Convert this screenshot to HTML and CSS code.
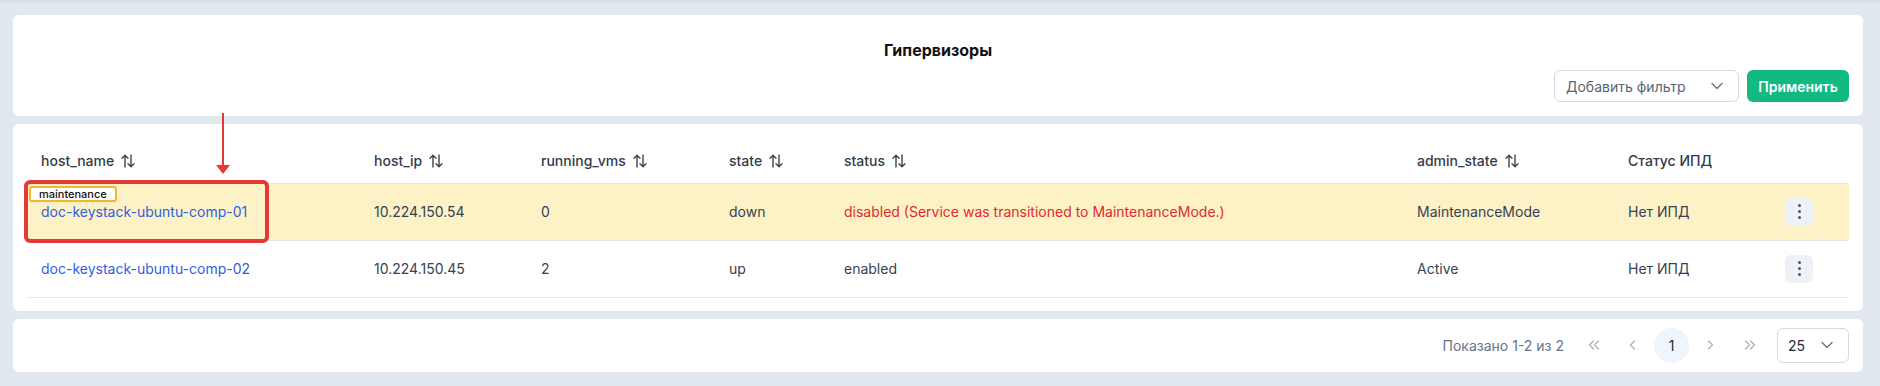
FILE: index.html
```html
<!DOCTYPE html>
<html lang="ru">
<head>
<meta charset="utf-8">
<title>Гипервизоры</title>
<link rel="stylesheet" href="styles.css">
</head>
<body>
<main class="page">
  <section class="card card-head">
    <h1 class="title">Гипервизоры</h1>
    <div class="filters">
      <div class="select filter-select">
        <span>Добавить фильтр</span>
        <svg class="chev" viewBox="0 0 12 8" width="12" height="8"><path d="M1 1.5l5 5 5-5" fill="none" stroke="currentColor" stroke-width="1.4" stroke-linecap="round" stroke-linejoin="round"/></svg>
      </div>
      <button class="btn-apply" type="button">Применить</button>
    </div>
  </section>

  <section class="card card-table">
    <table class="grid">
      <colgroup>
        <col class="c-name"><col class="c-ip"><col class="c-vms"><col class="c-state"><col class="c-status"><col class="c-admin"><col class="c-ipd"><col class="c-act">
      </colgroup>
      <thead>
        <tr>
          <th><span class="sort">host_name<svg class="sort-ic" viewBox="0 0 14 14" width="14" height="14"><path d="M4 13V1.3M1 4.3l3-3 3 3M10 1v11.7M7 9.7l3 3 3-3" fill="none" stroke="currentColor" stroke-width="1.4" stroke-linecap="round" stroke-linejoin="round"/></svg></span></th>
          <th><span class="sort">host_ip<svg class="sort-ic" viewBox="0 0 14 14" width="14" height="14"><path d="M4 13V1.3M1 4.3l3-3 3 3M10 1v11.7M7 9.7l3 3 3-3" fill="none" stroke="currentColor" stroke-width="1.4" stroke-linecap="round" stroke-linejoin="round"/></svg></span></th>
          <th><span class="sort">running_vms<svg class="sort-ic" viewBox="0 0 14 14" width="14" height="14"><path d="M4 13V1.3M1 4.3l3-3 3 3M10 1v11.7M7 9.7l3 3 3-3" fill="none" stroke="currentColor" stroke-width="1.4" stroke-linecap="round" stroke-linejoin="round"/></svg></span></th>
          <th><span class="sort">state<svg class="sort-ic" viewBox="0 0 14 14" width="14" height="14"><path d="M4 13V1.3M1 4.3l3-3 3 3M10 1v11.7M7 9.7l3 3 3-3" fill="none" stroke="currentColor" stroke-width="1.4" stroke-linecap="round" stroke-linejoin="round"/></svg></span></th>
          <th><span class="sort">status<svg class="sort-ic" viewBox="0 0 14 14" width="14" height="14"><path d="M4 13V1.3M1 4.3l3-3 3 3M10 1v11.7M7 9.7l3 3 3-3" fill="none" stroke="currentColor" stroke-width="1.4" stroke-linecap="round" stroke-linejoin="round"/></svg></span></th>
          <th><span class="sort">admin_state<svg class="sort-ic" viewBox="0 0 14 14" width="14" height="14"><path d="M4 13V1.3M1 4.3l3-3 3 3M10 1v11.7M7 9.7l3 3 3-3" fill="none" stroke="currentColor" stroke-width="1.4" stroke-linecap="round" stroke-linejoin="round"/></svg></span></th>
          <th>Статус ИПД</th>
          <th></th>
        </tr>
      </thead>
      <tbody>
        <tr class="row-warn">
          <td class="name-cell"><span class="tag">maintenance</span><a class="host-link" href="#">doc-keystack-ubuntu-comp-01</a></td>
          <td>10.224.150.54</td>
          <td>0</td>
          <td>down</td>
          <td class="status-bad">disabled (Service was transitioned to MaintenanceMode.)</td>
          <td>MaintenanceMode</td>
          <td>Нет ИПД</td>
          <td><button class="kebab" type="button"><span></span><span></span><span></span></button></td>
        </tr>
        <tr>
          <td class="name-cell"><a class="host-link" href="#">doc-keystack-ubuntu-comp-02</a></td>
          <td>10.224.150.45</td>
          <td>2</td>
          <td>up</td>
          <td>enabled</td>
          <td>Active</td>
          <td>Нет ИПД</td>
          <td><button class="kebab" type="button"><span></span><span></span><span></span></button></td>
        </tr>
      </tbody>
    </table>
    <div class="mark-box"></div>
    <svg class="mark-arrow" viewBox="0 0 14 61" width="14" height="61"><rect x="6" y="0" width="2" height="54" fill="#e53935"/><polygon points="0,52 14,52 7,61" fill="#e53935"/></svg>
  </section>

  <section class="card card-pager">
    <span class="pager-info">Показано 1-2 из 2</span>
    <div class="pager-btns">
      <span class="pbtn"><svg viewBox="0 0 12 10" width="12" height="10"><path d="M5.5 1L1.5 5l4 4M10.5 1l-4 4 4 4" fill="none" stroke="currentColor" stroke-width="1.2" stroke-linecap="round" stroke-linejoin="round"/></svg></span>
      <span class="pbtn"><svg viewBox="0 0 7 10" width="7" height="10"><path d="M5.5 1L1.5 5l4 4" fill="none" stroke="currentColor" stroke-width="1.2" stroke-linecap="round" stroke-linejoin="round"/></svg></span>
      <span class="pbtn pbtn-active">1</span>
      <span class="pbtn"><svg viewBox="0 0 7 10" width="7" height="10"><path d="M1.5 1l4 4-4 4" fill="none" stroke="currentColor" stroke-width="1.2" stroke-linecap="round" stroke-linejoin="round"/></svg></span>
      <span class="pbtn"><svg viewBox="0 0 12 10" width="12" height="10"><path d="M1.5 1l4 4-4 4M6.5 1l4 4-4 4" fill="none" stroke="currentColor" stroke-width="1.2" stroke-linecap="round" stroke-linejoin="round"/></svg></span>
    </div>
    <div class="select per-page">
      <span>25</span>
      <svg class="chev" viewBox="0 0 12 8" width="12" height="8"><path d="M1 1.5l5 5 5-5" fill="none" stroke="currentColor" stroke-width="1.4" stroke-linecap="round" stroke-linejoin="round"/></svg>
    </div>
  </section>
</main>
</body>
</html>
```

FILE: styles.css
```css
* { box-sizing: border-box; }

html, body {
  margin: 0;
  padding: 0;
}

body {
  background: linear-gradient(#d6dce6 0, #e2e8f0 4px) #e2e8f0;
  font-family: Inter, "Noto Sans", sans-serif;
  font-size: 14px;
  color: #374151;
  width: 1880px;
  height: 386px;
  overflow: hidden;
}

.page {
  display: flex;
  flex-direction: column;
  gap: 8px;
  padding: 15px 17px 0 13px;
}

.card {
  background: #fff;
  border-radius: 6px;
}

/* ---- header card ---- */
.card-head {
  height: 101px;
  padding: 23px 14px 0 14px;
  display: flex;
  flex-direction: column;
  gap: 8px;
}

.title {
  margin: 0;
  text-align: center;
  font-size: 16px;
  line-height: 24px;
  font-weight: 700;
  color: #111111;
}

.filters {
  display: flex;
  justify-content: flex-end;
  gap: 8px;
  height: 32px;
}

.select {
  display: flex;
  align-items: center;
  justify-content: space-between;
  border: 1px solid #d5d9e0;
  border-radius: 6px;
  background: #fff;
}

.filter-select {
  width: 185px;
  padding: 0 15px 0 11px;
  color: #5b6474;
}

.chev { color: #6b7280; }

.btn-apply {
  width: 102px;
  border: 0;
  border-radius: 6px;
  background: #12b981;
  color: #fff;
  font-family: inherit;
  font-size: 14px;
  font-weight: 600;
  padding: 0;
}

/* ---- table card ---- */
.card-table {
  position: relative;
  padding: 15px 14px 13px 14px;
}

.grid {
  width: 100%;
  border-collapse: collapse;
  table-layout: fixed;
}

.c-name { width: 333px; }
.c-ip { width: 167px; }
.c-vms { width: 188px; }
.c-state { width: 115px; }
.c-status { width: 573px; }
.c-admin { width: 211px; }
.c-ipd { width: 157px; }
.c-act { width: 78px; }

.grid th {
  height: 44px;
  padding: 0 14px;
  text-align: left;
  font-weight: 500;
  color: #333b48;
  border-bottom: 1px solid #e5e7eb;
  vertical-align: middle;
  white-space: nowrap;
}

.sort {
  display: inline-flex;
  align-items: center;
  gap: 7px;
}

.sort-ic { color: #3a4250; }

.grid td {
  height: 57px;
  padding: 0 14px;
  border-bottom: 1px solid #e5e7eb;
  vertical-align: middle;
  white-space: nowrap;
  color: #374151;
}

.row-warn td { background: #fdf2c6; }

.name-cell { position: relative; }

.host-link {
  color: #2f5fe0;
  text-decoration: none;
}

.tag {
  position: absolute;
  left: 2px;
  top: 2px;
  height: 16px;
  padding: 0 8px 0 8px;
  border: 2px solid #f4b731;
  border-radius: 3px;
  background: #fff;
  color: #111;
  font-size: 11px;
  font-weight: 500;
  line-height: 12px;
}

.status-bad { color: #e02a30 !important; }

.kebab {
  width: 28px;
  height: 28px;
  border: 0;
  border-radius: 6px;
  background: #eef2f7;
  display: flex;
  flex-direction: column;
  align-items: center;
  justify-content: center;
  gap: 3px;
  padding: 0;
}

.kebab span {
  width: 3px;
  height: 3px;
  border-radius: 50%;
  background: #4b5563;
}

.mark-box {
  position: absolute;
  left: 11px;
  top: 56px;
  width: 245px;
  height: 63px;
  border: 4px solid #e53935;
  border-radius: 6px;
}

.mark-arrow {
  position: absolute;
  left: 203px;
  top: -11px;
  overflow: visible;
}

/* ---- pager card ---- */
.card-pager {
  height: 53px;
  padding: 0 14px;
  display: flex;
  align-items: center;
  justify-content: flex-end;
}

.pager-info {
  color: #64748b;
  margin-right: 12px;
}

.pager-btns {
  display: flex;
  gap: 4px;
}

.pbtn {
  width: 35px;
  height: 35px;
  border-radius: 50%;
  display: flex;
  align-items: center;
  justify-content: center;
  color: #a8b0bd;
}

.pbtn-active {
  background: #eff5fd;
  color: #1f2937;
}

.per-page {
  width: 72px;
  height: 35px;
  margin-left: 10px;
  padding: 0 15px 0 10px;
  color: #1f2937;
}
```
